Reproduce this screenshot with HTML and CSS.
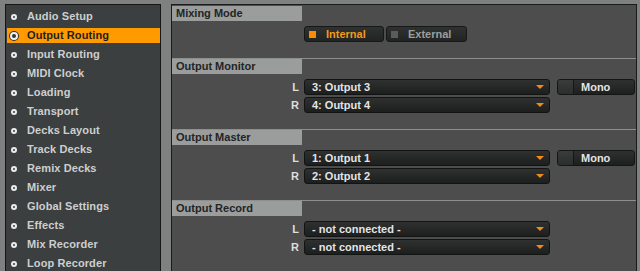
FILE: index.html
```html
<!DOCTYPE html>
<html>
<head>
<meta charset="utf-8">
<link rel="stylesheet" href="styles.css">
</head>
<body>
<div class="app">
  <nav class="sidebar">
    <div class="item"><span class="dot"></span>Audio Setup</div>
    <div class="item sel"><span class="dot"></span>Output Routing</div>
    <div class="item"><span class="dot"></span>Input Routing</div>
    <div class="item"><span class="dot"></span>MIDI Clock</div>
    <div class="item"><span class="dot"></span>Loading</div>
    <div class="item"><span class="dot"></span>Transport</div>
    <div class="item"><span class="dot"></span>Decks Layout</div>
    <div class="item"><span class="dot"></span>Track Decks</div>
    <div class="item"><span class="dot"></span>Remix Decks</div>
    <div class="item"><span class="dot"></span>Mixer</div>
    <div class="item"><span class="dot"></span>Global Settings</div>
    <div class="item"><span class="dot"></span>Effects</div>
    <div class="item"><span class="dot"></span>Mix Recorder</div>
    <div class="item"><span class="dot"></span>Loop Recorder</div>
  </nav>
  <main class="panel">
    <section class="section first">
      <div class="head">Mixing Mode</div>
      <div class="body">
        <div class="row">
          <span class="label"></span>
          <div class="toggles">
            <div class="toggle on"><span class="sq"></span>Internal</div>
            <div class="toggle"><span class="sq"></span>External</div>
          </div>
        </div>
      </div>
    </section>
    <section class="section">
      <div class="head">Output Monitor</div>
      <div class="body">
        <div class="row">
          <span class="label">L</span>
          <div class="select"><span>3: Output 3</span><span class="arrow"></span></div>
          <div class="mono"><span class="box"></span><span class="mtext">Mono</span></div>
        </div>
        <div class="row">
          <span class="label">R</span>
          <div class="select"><span>4: Output 4</span><span class="arrow"></span></div>
        </div>
      </div>
    </section>
    <section class="section">
      <div class="head">Output Master</div>
      <div class="body">
        <div class="row">
          <span class="label">L</span>
          <div class="select"><span>1: Output 1</span><span class="arrow"></span></div>
          <div class="mono"><span class="box"></span><span class="mtext">Mono</span></div>
        </div>
        <div class="row">
          <span class="label">R</span>
          <div class="select"><span>2: Output 2</span><span class="arrow"></span></div>
        </div>
      </div>
    </section>
    <section class="section">
      <div class="head">Output Record</div>
      <div class="body">
        <div class="row">
          <span class="label">L</span>
          <div class="select"><span>- not connected -</span><span class="arrow"></span></div>
        </div>
        <div class="row">
          <span class="label">R</span>
          <div class="select"><span>- not connected -</span><span class="arrow"></span></div>
        </div>
      </div>
    </section>
  </main>
</div>
</body>
</html>
```
FILE: styles.css
```css
* { box-sizing: border-box; }
html, body { margin: 0; padding: 0; }
body {
  background: #7e8180;
  font-family: "Liberation Sans", Arial, sans-serif;
  font-weight: bold;
  font-size: 11px;
  width: 640px;
  height: 271px;
  overflow: hidden;
}
.app {
  display: flex;
  align-items: flex-start;
  gap: 10px;
  padding: 4px 0 0 5px;
}
.sidebar {
  width: 156px;
  height: 267px;
  flex: none;
  background: #3c3f3f;
  border: 1px solid #151616;
  border-bottom: 0;
  padding-top: 4px;
  overflow: hidden;
}
.item {
  height: 15px;
  margin: 0 0 4px 1px;
  display: flex;
  align-items: center;
  color: #cdcfcf;
  line-height: 15px;
  letter-spacing: 0.1px;
}
.item.sel {
  background: #ff9a00;
  color: #1e1e1e;
}
.dot {
  width: 6px;
  height: 6px;
  border-radius: 50%;
  border: 2px solid #ececec;
  background: #3c3f3f;
  margin: 0 10px 0 4px;
  flex: none;
}
.item.sel .dot {
  width: 8px;
  height: 8px;
  margin: 0 9px 0 3px;
  border: 2px solid #f2f2f2;
  background: #333;
  box-shadow: 0 0 0 1px #333;
}
.panel {
  width: 466px;
  height: 267px;
  flex: none;
  background: #4c4d4c;
  border: 1px solid #1a1b1b;
  border-bottom: 0;
  overflow: hidden;
}
.section {
  border-top: 1px solid #8d8f8e;
  padding-bottom: 16px;
}
.section.first { border-top-color: #4c4d4c; }
.head {
  width: 130px;
  height: 15px;
  line-height: 15px;
  background: #9a9d9c;
  color: #232424;
  padding-left: 4px;
}
.body {
  padding-top: 5px;
  display: flex;
  flex-direction: column;
  gap: 2px;
}
.row {
  display: flex;
  align-items: center;
  height: 16px;
}
.label {
  width: 127px;
  margin-right: 5px;
  text-align: right;
  color: #dedede;
  flex: none;
}
.toggles { display: flex; gap: 2px; }
.toggle {
  height: 16px;
  width: 80px;
  border: 1px solid #161717;
  border-radius: 3px;
  background: linear-gradient(#303131, #222323);
  display: flex;
  align-items: center;
  color: #9c9e9e;
  line-height: 14px;
}
.toggle + .toggle { width: 81px; }
.toggle .sq {
  width: 7px;
  height: 7px;
  background: #5a5b5b;
  margin: 0 10px 0 4px;
}
.toggle.on { color: #f39a1c; }
.toggle.on .sq { background: #ff8a00; }
.select {
  width: 246px;
  height: 16px;
  border: 1px solid #121313;
  border-radius: 3px;
  background: linear-gradient(#2f3030, #1d1e1e);
  color: #e4e4e4;
  display: flex;
  align-items: center;
  justify-content: space-between;
  padding: 0 5px 0 7px;
  line-height: 14px;
  flex: none;
}
.arrow {
  width: 0;
  height: 0;
  border-left: 4px solid transparent;
  border-right: 4px solid transparent;
  border-top: 4px solid #f28a1c;
}
.mono {
  width: 78px;
  height: 16px;
  margin-left: 7px;
  border: 1px solid #141515;
  border-radius: 3px;
  background: linear-gradient(#2f3030, #1e1f1f);
  display: flex;
  align-items: center;
  flex: none;
}
.mono .box {
  width: 16px;
  height: 14px;
  border-right: 1px solid #151616;
  background: linear-gradient(#3a3b3b, #2c2d2d);
  border-radius: 2px 0 0 2px;
}
.mtext {
  color: #e4e4e4;
  margin-left: 7px;
  line-height: 14px;
}
```
